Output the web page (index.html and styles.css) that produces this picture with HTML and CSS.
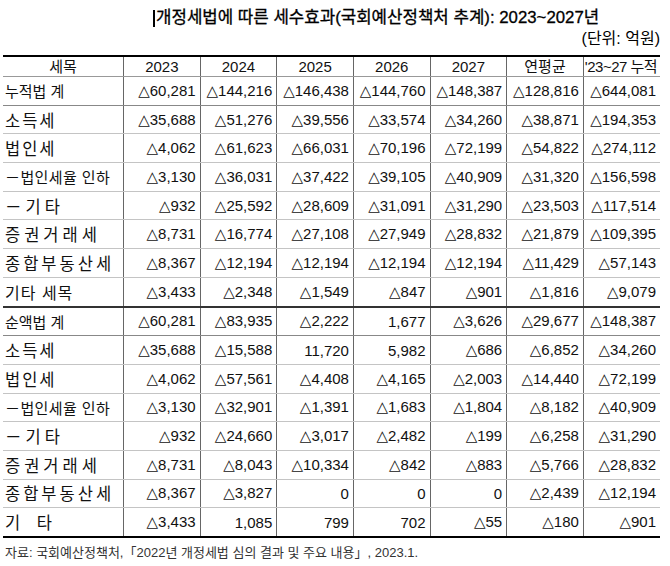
FILE: index.html
```html
<!DOCTYPE html>
<html lang="ko">
<head>
<meta charset="utf-8">
<link rel="stylesheet" href="styles.css">
</head>
<body>
<div class="page">
  <div class="title"><span class="bar"></span>개정세법에 따른 세수효과(국회예산정책처 추계): 2023~2027년</div>
  <div class="unit">(단위: 억원)</div>
  <table class="tax">
    <thead>
      <tr><th>세목</th><th>2023</th><th>2024</th><th>2025</th><th>2026</th><th>2027</th><th>연평균</th><th class="cum">'23~27 누적</th></tr>
    </thead>
    <tbody>
      <tr class="sum"><td>누적법 계</td><td>△60,281</td><td>△144,216</td><td>△146,438</td><td>△144,760</td><td>△148,387</td><td>△128,816</td><td>△644,081</td></tr>
      <tr><td class="s3">소득세</td><td>△35,688</td><td>△51,276</td><td>△39,556</td><td>△33,574</td><td>△34,260</td><td>△38,871</td><td>△194,353</td></tr>
      <tr><td class="s3">법인세</td><td>△4,062</td><td>△61,623</td><td>△66,031</td><td>△70,196</td><td>△72,199</td><td>△54,822</td><td>△274,112</td></tr>
      <tr><td class="s0">－법인세율 인하</td><td>△3,130</td><td>△36,031</td><td>△37,422</td><td>△39,105</td><td>△40,909</td><td>△31,320</td><td>△156,598</td></tr>
      <tr><td class="s6">－기타</td><td>△932</td><td>△25,592</td><td>△28,609</td><td>△31,091</td><td>△31,290</td><td>△23,503</td><td>△117,514</td></tr>
      <tr><td class="s5">증권거래세</td><td>△8,731</td><td>△16,774</td><td>△27,108</td><td>△27,949</td><td>△28,832</td><td>△21,879</td><td>△109,395</td></tr>
      <tr><td class="s4">종합부동산세</td><td>△8,367</td><td>△12,194</td><td>△12,194</td><td>△12,194</td><td>△12,194</td><td>△11,429</td><td>△57,143</td></tr>
      <tr class="split"><td class="s2">기타 세목</td><td>△3,433</td><td>△2,348</td><td>△1,549</td><td>△847</td><td>△901</td><td>△1,816</td><td>△9,079</td></tr>
      <tr class="sum"><td>순액법 계</td><td>△60,281</td><td>△83,935</td><td>△2,222</td><td>1,677</td><td>△3,626</td><td>△29,677</td><td>△148,387</td></tr>
      <tr><td class="s3">소득세</td><td>△35,688</td><td>△15,588</td><td>11,720</td><td>5,982</td><td>△686</td><td>△6,852</td><td>△34,260</td></tr>
      <tr><td class="s3">법인세</td><td>△4,062</td><td>△57,561</td><td>△4,408</td><td>△4,165</td><td>△2,003</td><td>△14,440</td><td>△72,199</td></tr>
      <tr><td class="s0">－법인세율 인하</td><td>△3,130</td><td>△32,901</td><td>△1,391</td><td>△1,683</td><td>△1,804</td><td>△8,182</td><td>△40,909</td></tr>
      <tr><td class="s6">－기타</td><td>△932</td><td>△24,660</td><td>△3,017</td><td>△2,482</td><td>△199</td><td>△6,258</td><td>△31,290</td></tr>
      <tr><td class="s5">증권거래세</td><td>△8,731</td><td>△8,043</td><td>△10,334</td><td>△842</td><td>△883</td><td>△5,766</td><td>△28,832</td></tr>
      <tr><td class="s4">종합부동산세</td><td>△8,367</td><td>△3,827</td><td>0</td><td>0</td><td>0</td><td>△2,439</td><td>△12,194</td></tr>
      <tr class="last"><td class="sw">기 타</td><td>△3,433</td><td>1,085</td><td>799</td><td>702</td><td>△55</td><td>△180</td><td>△901</td></tr>
    </tbody>
  </table>
  <div class="source">자료: 국회예산정책처,「2022년 개정세법 심의 결과 및 주요 내용」, 2023.1.</div>
</div>
</body>
</html>
```
FILE: styles.css
```css
html, body {
  margin: 0;
  padding: 0;
  background: #fff;
}
body {
  font-family: "Liberation Sans", "DejaVu Sans", "Noto Sans CJK KR", sans-serif;
  color: #111;
}
.page {
  width: 670px;
  padding-top: 7px;
}
.title {
  font-family: "Liberation Sans", "Noto Sans CJK KR", sans-serif;
  font-size: 16.8px;
  font-weight: normal;
  -webkit-text-stroke: 0.3px #000;
  line-height: 22px;
  padding-left: 153px;
  display: flex;
  align-items: center;
  color: #000;
}
.bar {
  display: inline-block;
  width: 2px;
  height: 17px;
  background: #000;
  margin-right: 1px;
}
.unit {
  font-family: "Liberation Sans", "Noto Sans CJK KR", sans-serif;
  font-size: 16px;
  line-height: 19px;
  text-align: right;
  padding-right: 10px;
  color: #000;
}
.tax {
  margin-top: 7px;
  margin-left: 3px;
  width: 657px;
  border-collapse: collapse;
  table-layout: fixed;
  font-size: 15px;
  border-top: 2px solid #000;
  border-bottom: 2px solid #000;
}
.tax th, .tax td {
  padding: 0 4px;
  white-space: nowrap;
  overflow: hidden;
  border-left: 1px solid #666;
}
.tax th:first-child, .tax td:first-child {
  border-left: none;
  width: 112px;
}
.tax th {
  font-weight: normal;
  height: 19px;
  line-height: 19px;
  text-align: center;
  border-bottom: 1px solid #999;
}
.tax th.cum {
  padding: 0 1px;
  letter-spacing: -0.5px;
  text-align: left;
}
.tax td {
  height: 27.7px;
  text-align: right;
  border-bottom: 1px solid #c4c4c4;
}
.tax td:first-child {
  text-align: left;
  padding-left: 2px;
}
.tax td.s0 { letter-spacing: 0.4px; }
.tax td.s2 { font-size: 16px; letter-spacing: 1px; }
.tax td.s3 { font-size: 16.5px; letter-spacing: 2px; }
.tax td.s4 { font-size: 16.5px; letter-spacing: 3px; }
.tax td.s5 { font-size: 16.5px; letter-spacing: 4px; }
.tax td.s6 { font-size: 16.5px; letter-spacing: 4px; }
.tax td.sw { font-size: 16.5px; word-spacing: 12px; }
.tax tr.sum td {
  border-bottom-color: #888;
}
.tax tr.split td {
  border-bottom: 2px solid #333;
}
.tax tr.last td {
  border-bottom: none;
}
.source {
  font-family: "Liberation Sans", "Noto Sans CJK KR", sans-serif;
  font-size: 13px;
  color: #333;
  padding-left: 5px;
  margin-top: 4px;
}
```
